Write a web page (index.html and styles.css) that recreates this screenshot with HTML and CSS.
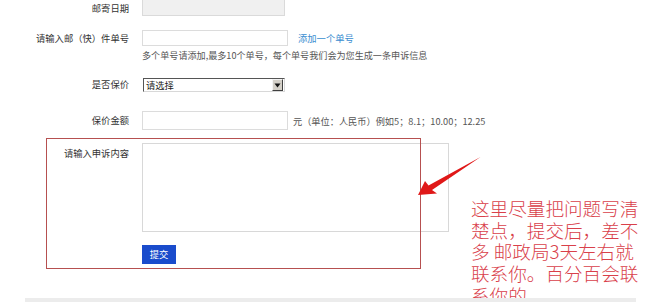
FILE: index.html
```html
<!DOCTYPE html>
<html lang="zh-CN">
<head>
<meta charset="utf-8">
<title>申诉</title>
<link rel="stylesheet" href="styles.css">
</head>
<body>
<div class="page">
  <form class="form">
    <div class="row row-date">
      <label class="lbl">邮寄日期</label>
      <div class="field"><input class="inp inp-date" type="text" disabled></div>
    </div>
    <div class="row row-no">
      <label class="lbl">请输入邮（快）件单号</label>
      <div class="field">
        <div class="inline">
          <input class="inp inp-no" type="text">
          <a class="link" href="#">添加一个单号</a>
        </div>
        <p class="help">多个单号请添加,最多10个单号，每个单号我们会为您生成一条申诉信息</p>
      </div>
    </div>
    <div class="row row-sel">
      <label class="lbl">是否保价</label>
      <div class="field">
        <div class="select"><span class="sel-text">请选择</span><span class="sel-btn"><svg width="7" height="5" viewBox="0 0 7 5"><path d="M0.5 0.5h6L3.5 4.5z" fill="#111"/></svg></span></div>
      </div>
    </div>
    <div class="row row-amt">
      <label class="lbl">保价金额</label>
      <div class="field inline">
        <input class="inp inp-amt" type="text">
        <span class="unit">元（单位：人民币）例如5；8.1；10.00；12.25</span>
      </div>
    </div>
    <div class="row row-txt">
      <label class="lbl">请输入申诉内容</label>
      <div class="field"><textarea class="ta"></textarea></div>
    </div>
    <div class="row row-btn">
      <span></span>
      <div class="field"><button class="btn" type="button">提交</button></div>
    </div>
  </form>

  <div class="mark-box"></div>
  <svg class="mark-arrow" width="80" height="50" viewBox="410 150 80 50">
    <path d="M418 195 L425 181 L428.5 185.5 L480.5 157 L432 190 L437 193.5 Z" fill="#e01818"/>
  </svg>
  <div class="note">
    <div class="note-line">这里尽量把问题写清</div>
    <div class="note-line">楚点，提交后，差不</div>
    <div class="note-line">多 邮政局3天左右就</div>
    <div class="note-line">联系你。百分百会联</div>
    <div class="note-line">系你的</div>
  </div>
  <div class="bottom-line"></div>
</div>
</body>
</html>
```

FILE: styles.css
```css
* { box-sizing: border-box; }
html, body { margin: 0; padding: 0; background: #fff; }
body {
  width: 650px;
  height: 302px;
  overflow: hidden;
  font-family: "Noto Sans CJK SC", "Liberation Sans", sans-serif;
  font-size: 9.3px;
  color: #333;
}
.page { position: relative; width: 650px; height: 302px; overflow: hidden; }
.form { margin: 0; padding: 0; }

.row {
  display: grid;
  grid-template-columns: 129px auto;
  column-gap: 13px;
  align-items: start;
}
.lbl {
  text-align: right;
  white-space: nowrap;
  color: #333;
}
.field { min-width: 0; }
.inline { display: flex; align-items: center; }

.inp {
  display: block;
  margin: 0;
  padding: 0 3px;
  border: 1px solid #dcdcdc;
  background: #fff;
  font: inherit;
  outline: none;
}

/* row 1 : date (top edge cut off) */
.row-date { margin-top: -4px; }
.row-date .lbl { padding-top: 4px; line-height: 16px; }
.inp-date { width: 143px; height: 20px; background: #f0f0f0; border-color: #dadada; }

/* row 2 : tracking number */
.row-no { margin-top: 14px; }
.row-no .lbl { line-height: 16px; }
.inp-no { width: 146px; height: 16px; }
.link { margin-left: 10px; color: #3a8dd0; text-decoration: none; line-height: 16px; }
.help { margin: 4px 0 0; line-height: 11px; font-size: 9.1px; color: #555; white-space: nowrap; }

/* row 3 : select */
.row-sel { margin-top: 17px; }
.row-sel .lbl { line-height: 13px; }
.select {
  position: relative;
  width: 142px;
  height: 14px;
  margin-left: 1px;
  border-top: 1px solid #555;
  border-left: 1px solid #555;
  border-right: 1px solid #d8d8d8;
  border-bottom: 1px solid #d8d8d8;
  background: #fff;
}
.sel-text { display: block; padding-left: 2px; line-height: 12px; color: #222; }
.sel-btn {
  position: absolute;
  right: 1px;
  top: 0;
  width: 11px;
  height: 12px;
  background: #d4d0c8;
  border: 1px solid;
  border-color: #f4f4f4 #404040 #404040 #f4f4f4;
  display: flex;
  align-items: center;
  justify-content: center;
}

/* row 4 : amount */
.row-amt { margin-top: 19px; }
.row-amt .lbl { line-height: 19px; }
.inp-amt { width: 146px; height: 19px; }
.unit { margin-left: 5px; color: #555; white-space: nowrap; font-size: 9.2px; }

/* row 5 : textarea */
.row-txt { margin-top: 13px; }
.row-txt .lbl { padding-top: 4px; line-height: 12px; }
.ta {
  display: block;
  width: 307px;
  height: 89px;
  margin: 0;
  border: 1px solid #d8d8d8;
  resize: none;
  font: inherit;
  outline: none;
}

/* row 6 : button */
.row-btn { margin-top: 13px; }
.btn {
  display: block;
  width: 34px;
  height: 19px;
  margin: 0;
  padding: 0;
  border: none;
  background: #1a4ccc;
  color: #fff;
  font: inherit;
  line-height: 19px;
}

.bottom-line {
  position: absolute;
  left: 25px;
  top: 298px;
  width: 611px;
  height: 4px;
  background: #ececec;
}

/* annotations drawn over the screenshot */
.mark-box {
  position: absolute;
  left: 46px;
  top: 138px;
  width: 375px;
  height: 131px;
  border: 1px solid #b65050;
}
.mark-arrow { position: absolute; left: 410px; top: 150px; }
.note {
  position: absolute;
  left: 471px;
  top: 197px;
  font-size: 18.6px;
  font-weight: 300;
  color: #d9404a;
  white-space: nowrap;
}
.note-line { height: 21.7px; line-height: 21.7px; }
```
